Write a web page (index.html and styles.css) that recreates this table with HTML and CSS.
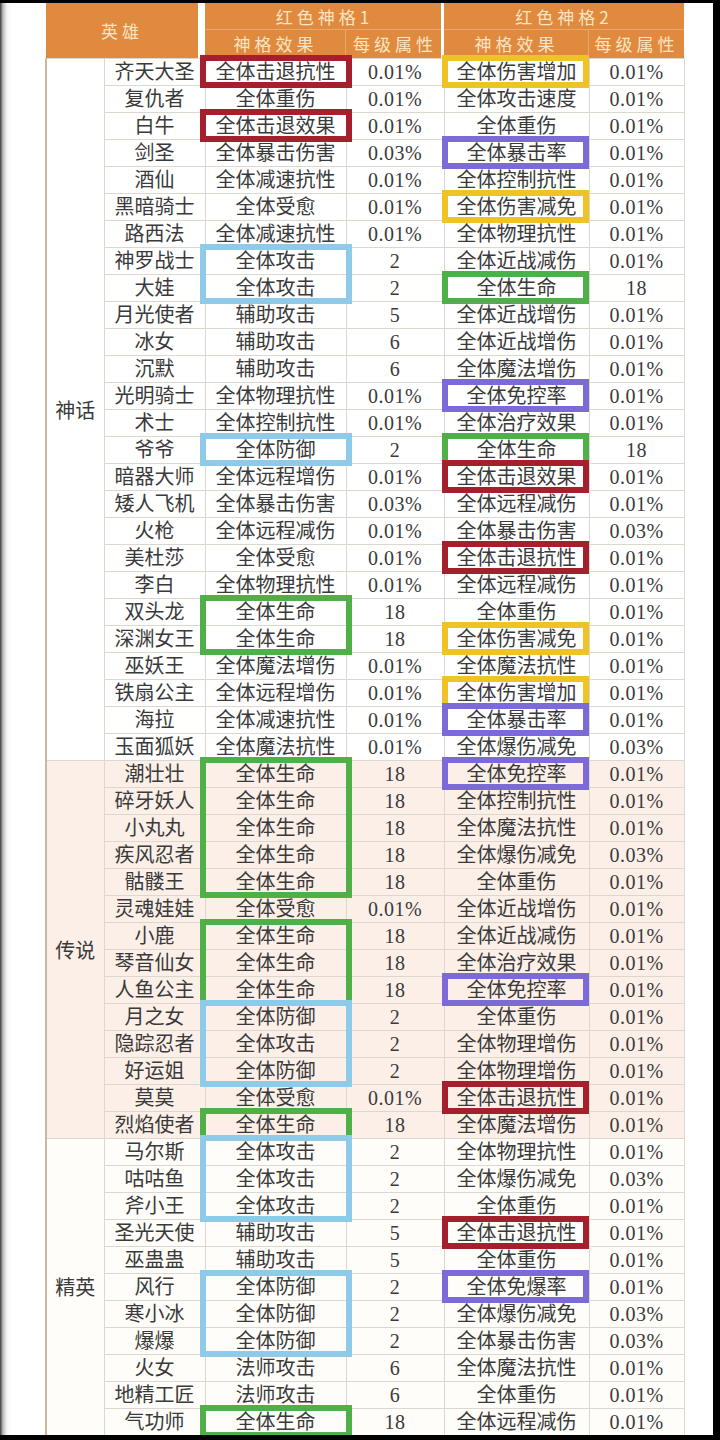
FILE: index.html
```html
<!DOCTYPE html>
<html lang="zh-CN">
<head>
<meta charset="utf-8">
<title>红色神格</title>
<link rel="stylesheet" href="styles.css">
</head>
<body>
<div class="frame">
<div class="sheet">
<div class="wrap">
<table class="grid">
<colgroup><col class="c-cat"><col class="c-name"><col class="c-e1"><col class="c-v1"><col class="c-e2"><col class="c-v2"></colgroup>
<thead>
<tr class="h1"><th colspan="2" rowspan="2" class="hero">英雄</th><th colspan="2" class="g1">红色神格1</th><th colspan="2">红色神格2</th></tr>
<tr class="h2"><th class="sub">神格效果</th><th class="g1">每级属性</th><th class="sub">神格效果</th><th>每级属性</th></tr>
</thead>
<tbody>
<tr><td class="cat" rowspan="26">神话</td><td>齐天大圣</td><td>全体击退抗性</td><td class="num">0.01%</td><td>全体伤害增加</td><td class="num">0.01%</td></tr>
<tr><td>复仇者</td><td>全体重伤</td><td class="num">0.01%</td><td>全体攻击速度</td><td class="num">0.01%</td></tr>
<tr><td>白牛</td><td>全体击退效果</td><td class="num">0.01%</td><td>全体重伤</td><td class="num">0.01%</td></tr>
<tr><td>剑圣</td><td>全体暴击伤害</td><td class="num">0.03%</td><td>全体暴击率</td><td class="num">0.01%</td></tr>
<tr><td>酒仙</td><td>全体减速抗性</td><td class="num">0.01%</td><td>全体控制抗性</td><td class="num">0.01%</td></tr>
<tr><td>黑暗骑士</td><td>全体受愈</td><td class="num">0.01%</td><td>全体伤害减免</td><td class="num">0.01%</td></tr>
<tr><td>路西法</td><td>全体减速抗性</td><td class="num">0.01%</td><td>全体物理抗性</td><td class="num">0.01%</td></tr>
<tr><td>神罗战士</td><td>全体攻击</td><td class="num">2</td><td>全体近战减伤</td><td class="num">0.01%</td></tr>
<tr><td>大娃</td><td>全体攻击</td><td class="num">2</td><td>全体生命</td><td class="num">18</td></tr>
<tr><td>月光使者</td><td>辅助攻击</td><td class="num">5</td><td>全体近战增伤</td><td class="num">0.01%</td></tr>
<tr><td>冰女</td><td>辅助攻击</td><td class="num">6</td><td>全体近战增伤</td><td class="num">0.01%</td></tr>
<tr><td>沉默</td><td>辅助攻击</td><td class="num">6</td><td>全体魔法增伤</td><td class="num">0.01%</td></tr>
<tr><td>光明骑士</td><td>全体物理抗性</td><td class="num">0.01%</td><td>全体免控率</td><td class="num">0.01%</td></tr>
<tr><td>术士</td><td>全体控制抗性</td><td class="num">0.01%</td><td>全体治疗效果</td><td class="num">0.01%</td></tr>
<tr><td>爷爷</td><td>全体防御</td><td class="num">2</td><td>全体生命</td><td class="num">18</td></tr>
<tr><td>暗器大师</td><td>全体远程增伤</td><td class="num">0.01%</td><td>全体击退效果</td><td class="num">0.01%</td></tr>
<tr><td>矮人飞机</td><td>全体暴击伤害</td><td class="num">0.03%</td><td>全体远程减伤</td><td class="num">0.01%</td></tr>
<tr><td>火枪</td><td>全体远程减伤</td><td class="num">0.01%</td><td>全体暴击伤害</td><td class="num">0.03%</td></tr>
<tr><td>美杜莎</td><td>全体受愈</td><td class="num">0.01%</td><td>全体击退抗性</td><td class="num">0.01%</td></tr>
<tr><td>李白</td><td>全体物理抗性</td><td class="num">0.01%</td><td>全体远程减伤</td><td class="num">0.01%</td></tr>
<tr><td>双头龙</td><td>全体生命</td><td class="num">18</td><td>全体重伤</td><td class="num">0.01%</td></tr>
<tr><td>深渊女王</td><td>全体生命</td><td class="num">18</td><td>全体伤害减免</td><td class="num">0.01%</td></tr>
<tr><td>巫妖王</td><td>全体魔法增伤</td><td class="num">0.01%</td><td>全体魔法抗性</td><td class="num">0.01%</td></tr>
<tr><td>铁扇公主</td><td>全体远程增伤</td><td class="num">0.01%</td><td>全体伤害增加</td><td class="num">0.01%</td></tr>
<tr><td>海拉</td><td>全体减速抗性</td><td class="num">0.01%</td><td>全体暴击率</td><td class="num">0.01%</td></tr>
<tr><td>玉面狐妖</td><td>全体魔法抗性</td><td class="num">0.01%</td><td>全体爆伤减免</td><td class="num">0.03%</td></tr>

<tr class="leg"><td class="cat" rowspan="14">传说</td><td>潮壮壮</td><td>全体生命</td><td class="num">18</td><td>全体免控率</td><td class="num">0.01%</td></tr>
<tr class="leg"><td>碎牙妖人</td><td>全体生命</td><td class="num">18</td><td>全体控制抗性</td><td class="num">0.01%</td></tr>
<tr class="leg"><td>小丸丸</td><td>全体生命</td><td class="num">18</td><td>全体魔法抗性</td><td class="num">0.01%</td></tr>
<tr class="leg"><td>疾风忍者</td><td>全体生命</td><td class="num">18</td><td>全体爆伤减免</td><td class="num">0.03%</td></tr>
<tr class="leg"><td>骷髅王</td><td>全体生命</td><td class="num">18</td><td>全体重伤</td><td class="num">0.01%</td></tr>
<tr class="leg"><td>灵魂娃娃</td><td>全体受愈</td><td class="num">0.01%</td><td>全体近战增伤</td><td class="num">0.01%</td></tr>
<tr class="leg"><td>小鹿</td><td>全体生命</td><td class="num">18</td><td>全体近战减伤</td><td class="num">0.01%</td></tr>
<tr class="leg"><td>琴音仙女</td><td>全体生命</td><td class="num">18</td><td>全体治疗效果</td><td class="num">0.01%</td></tr>
<tr class="leg"><td>人鱼公主</td><td>全体生命</td><td class="num">18</td><td>全体免控率</td><td class="num">0.01%</td></tr>
<tr class="leg"><td>月之女</td><td>全体防御</td><td class="num">2</td><td>全体重伤</td><td class="num">0.01%</td></tr>
<tr class="leg"><td>隐踪忍者</td><td>全体攻击</td><td class="num">2</td><td>全体物理增伤</td><td class="num">0.01%</td></tr>
<tr class="leg"><td>好运姐</td><td>全体防御</td><td class="num">2</td><td>全体物理增伤</td><td class="num">0.01%</td></tr>
<tr class="leg"><td>莫莫</td><td>全体受愈</td><td class="num">0.01%</td><td>全体击退抗性</td><td class="num">0.01%</td></tr>
<tr class="leg"><td>烈焰使者</td><td>全体生命</td><td class="num">18</td><td>全体魔法增伤</td><td class="num">0.01%</td></tr>

<tr class="eli"><td class="cat" rowspan="11">精英</td><td>马尔斯</td><td>全体攻击</td><td class="num">2</td><td>全体物理抗性</td><td class="num">0.01%</td></tr>
<tr class="eli"><td>咕咕鱼</td><td>全体攻击</td><td class="num">2</td><td>全体爆伤减免</td><td class="num">0.03%</td></tr>
<tr class="eli"><td>斧小王</td><td>全体攻击</td><td class="num">2</td><td>全体重伤</td><td class="num">0.01%</td></tr>
<tr class="eli"><td>圣光天使</td><td>辅助攻击</td><td class="num">5</td><td>全体击退抗性</td><td class="num">0.01%</td></tr>
<tr class="eli"><td>巫蛊蛊</td><td>辅助攻击</td><td class="num">5</td><td>全体重伤</td><td class="num">0.01%</td></tr>
<tr class="eli"><td>风行</td><td>全体防御</td><td class="num">2</td><td>全体免爆率</td><td class="num">0.01%</td></tr>
<tr class="eli"><td>寒小冰</td><td>全体防御</td><td class="num">2</td><td>全体爆伤减免</td><td class="num">0.03%</td></tr>
<tr class="eli"><td>爆爆</td><td>全体防御</td><td class="num">2</td><td>全体暴击伤害</td><td class="num">0.03%</td></tr>
<tr class="eli"><td>火女</td><td>法师攻击</td><td class="num">6</td><td>全体魔法抗性</td><td class="num">0.01%</td></tr>
<tr class="eli"><td>地精工匠</td><td>法师攻击</td><td class="num">6</td><td>全体重伤</td><td class="num">0.01%</td></tr>
<tr class="eli"><td>气功师</td><td>全体生命</td><td class="num">18</td><td>全体远程减伤</td><td class="num">0.01%</td></tr>
</tbody>
</table>

<div class="mark e1 red" style="top:52px;height:33px"></div>
<div class="mark e1 red" style="top:106px;height:33px"></div>
<div class="mark e1 blue" style="top:241px;height:60px"></div>
<div class="mark e1 blue" style="top:430px;height:33px"></div>
<div class="mark e1 green" style="top:592px;height:60px"></div>
<div class="mark e1 green" style="top:754px;height:141px"></div>
<div class="mark e1 green" style="top:916px;height:87px"></div>
<div class="mark e1 blue" style="top:997px;height:87px"></div>
<div class="mark e1 green" style="top:1105px;height:33px"></div>
<div class="mark e1 blue" style="top:1132px;height:87px"></div>
<div class="mark e1 blue" style="top:1267px;height:87px"></div>
<div class="mark e1 green" style="top:1402px;height:33px"></div>

<div class="mark e2 yellow" style="top:52px;height:33px"></div>
<div class="mark e2 purple" style="top:133px;height:33px"></div>
<div class="mark e2 yellow" style="top:187px;height:33px"></div>
<div class="mark e2 green" style="top:268px;height:33px"></div>
<div class="mark e2 purple" style="top:376px;height:33px"></div>
<div class="mark e2 green" style="top:430px;height:33px"></div>
<div class="mark e2 red" style="top:457px;height:33px"></div>
<div class="mark e2 red" style="top:538px;height:33px"></div>
<div class="mark e2 yellow" style="top:619px;height:33px"></div>
<div class="mark e2 yellow" style="top:673px;height:33px"></div>
<div class="mark e2 purple" style="top:700px;height:33px"></div>
<div class="mark e2 purple" style="top:754px;height:33px"></div>
<div class="mark e2 purple" style="top:970px;height:33px"></div>
<div class="mark e2 red" style="top:1078px;height:33px"></div>
<div class="mark e2 red" style="top:1213px;height:33px"></div>
<div class="mark e2 purple" style="top:1267px;height:33px"></div>
</div>
</div>
</div>
</body>
</html>
```
FILE: styles.css
```css
html, body {
  margin: 0;
  padding: 0;
  background: #000;
}

.frame {
  width: 720px;
  height: 1440px;
  box-sizing: border-box;
  padding: 3px 7px 5px 0;
  background: #000;
}

.sheet {
  height: 100%;
  box-sizing: border-box;
  padding-left: 45px;
  overflow: hidden;
  background: linear-gradient(to right, #3a3a3a 0, #bdbdbd 3px, #f4f4f4 7px, #fff 12px);
}

.wrap {
  position: relative;
  width: 638px;
}

.grid {
  width: 638px;
  border-collapse: collapse;
  table-layout: fixed;
  font-family: "Liberation Serif", "Noto Sans CJK SC", serif;
  color: #3a3a3a;
}

.c-cat { width: 58px; }
.c-name { width: 101px; }
.c-e1 { width: 141px; }
.c-v1 { width: 98px; }
.c-e2 { width: 145px; }
.c-v2 { width: 95px; }

.grid th {
  background: #e08a40;
  color: #fbe4c3;
  font-family: "Noto Sans CJK SC", sans-serif;
  font-weight: 400;
  font-size: 17px;
  letter-spacing: 4px;
  padding: 0;
  border: 0;
  text-align: center;
}

.grid .h1 th {
  height: 27px;
  line-height: 27px;
  box-shadow: inset 0 -1px 0 #eba56a;
}

.grid .h2 th {
  height: 28px;
  line-height: 28px;
}

.grid th.hero {
  box-shadow: inset -7px 0 0 #fff;
  padding-right: 7px;
}

.grid th.g1 {
  box-shadow: inset -3px 0 0 #fff;
}

.grid .h1 th.g1 {
  box-shadow: inset -3px 0 0 #fff, inset 0 -1px 0 #eba56a;
}

.grid th.sub {
  box-shadow: inset -1px 0 0 #eba56a;
}

.grid td {
  height: 26px;
  padding: 0;
  border: 1px solid #dcd7cf;
  text-align: center;
  font-size: 20px;
  line-height: 26px;
  white-space: nowrap;
  overflow: hidden;
  background: #fff;
}

.grid td.num {
  font-size: 20px;
  letter-spacing: 0.5px;
}

.grid td.cat {
  border-left: 2px solid #cdb999;
  font-family: "Noto Sans CJK SC", sans-serif;
}

.grid tr.leg td {
  background: #fbefe8;
}

.grid tr.eli td {
  background: #fefdf9;
}

.mark {
  position: absolute;
  box-sizing: border-box;
  border: 6px solid;
}

.mark.e1 {
  left: 155px;
  width: 152px;
}

.mark.e2 {
  left: 397px;
  width: 147px;
}

.red { border-color: #a51f2c; }
.yellow { border-color: #f0c324; }
.purple { border-color: #7b6ad8; }
.blue { border-color: #8fcbe9; }
.green { border-color: #4fb049; }
```
